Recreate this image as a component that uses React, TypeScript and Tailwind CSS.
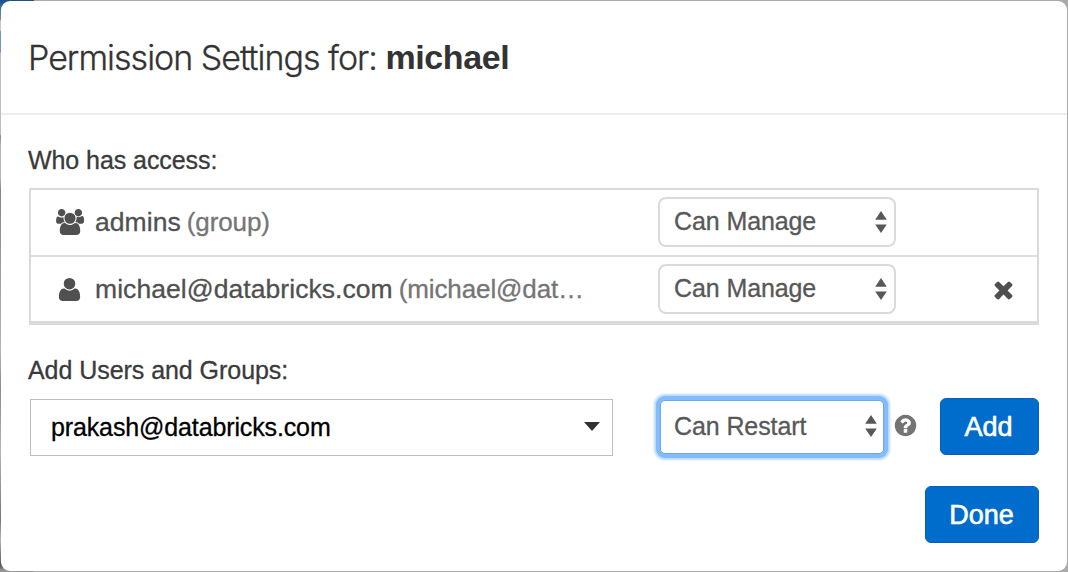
import type { ReactNode } from "react";

const USERS =
  "M657 896q-162 5-265 128h-134q-82 0-138-40.5t-56-118.5q0-353 124-353 6 0 43.5 21t97.5 42.5 119 21.5q67 0 133-23-5 37-5 66 0 159 93 293zm1071 637q0 120-73 189.5t-194 69.5h-874q-121 0-194-69.5t-73-189.5q0-53 3.5-103.5t14-109 26.5-108.5 43-97.5 62-81 85.5-53.5 111.5-20q10 0 43 21.5t73 48 107 48 135 21.5 135-21.5 107-48 73-48 43-21.5q61 0 111.5 20t85.5 53.5 62 81 43 97.5 26.5 108.5 14 109 3.5 103.5zm-1024-1277q0 106-75 181t-181 75-181-75-75-181 75-181 181-75 181 75 75 181zm704 384q0 159-112.5 271.5t-271.5 112.5-271.5-112.5-112.5-271.5 112.5-271.5 271.5-112.5 271.5 112.5 112.5 271.5zm576 225q0 78-56 118.5t-138 40.5h-134q-103-123-265-128 93-134 93-293 0-29-5-66 66 23 133 23 59 0 119-21.5t97.5-42.5 43.5-21q124 0 124 353zm-128-609q0 106-75 181t-181 75-181-75-75-181 75-181 181-75 181 75 75 181z";
const USER =
  "M1600 1405q0 120-73 189.5t-194 69.5h-874q-121 0-194-69.5t-73-189.5q0-53 3.5-103.5t14-109 26.5-108.5 43-97.5 62-81 85.5-53.5 111.5-20q9 0 42 21.5t74.5 48 108 48 133.5 21.5 133.5-21.5 108-48 74.5-48 42-21.5q61 0 111.5 20t85.5 53.5 62 81 43 97.5 26.5 108.5 14 109 3.5 103.5zm-320-893q0 159-112.5 271.5t-271.5 112.5-271.5-112.5-112.5-271.5 112.5-271.5 271.5-112.5 271.5 112.5 112.5 271.5z";
const TIMES =
  "M1490 1322q0 40-28 68l-136 136q-28 28-68 28t-68-28l-294-294-294 294q-28 28-68 28t-68-28l-136-136q-28-28-28-68t28-68l294-294-294-294q-28-28-28-68t28-68l136-136q28-28 68-28t68 28l294 294 294-294q28-28 68-28t68 28l136 136q28 28 28 68t-28 68l-294 294 294 294q28 28 28 68z";
const QUESTION =
  "M1024 1376v-192q0-14-9-23t-23-9h-192q-14 0-23 9t-9 23v192q0 14 9 23t23 9h192q14 0 23-9t9-23zm256-672q0-88-55.5-163t-138.5-116-170-41q-243 0-371 213-15 24 8 42l132 100q7 6 19 6 16 0 25-12 53-68 86-92 34-24 86-24 48 0 85.5 26t37.5 59q0 38-20 61t-68 45q-63 28-115.5 86.5t-52.5 125.5v36q0 14 9 23t23 9h192q14 0 23-9t9-23q0-19 21.5-49.5t54.5-49.5q32-18 49-28.5t46-35 44.5-48 28-60.5 12.5-81zm384 192q0 209-103 385.5t-279.5 279.5-385.5 103-385.5-103-279.5-279.5-103-385.5 103-385.5 279.5-279.5 385.5-103 385.5 103 279.5 279.5 103 385.5z";

function Arrows() {
  return (
    <svg className="h-[22px] w-3 shrink-0" viewBox="0 0 12 22" fill="#585858">
      <path d="M6 0 11.8 8.8H.2zM6 22 .2 13.4h11.6z" />
    </svg>
  );
}

function Select({ label }: { label: string }) {
  return (
    <button className="mb-px flex h-[50px] w-[238px] items-center justify-between rounded-lg border-2 border-[#dadada] bg-white pr-[7px] pb-px pl-[14px] text-[25px] leading-none tracking-[-0.1px] text-[#585858]">
      <span>{label}</span>
      <Arrows />
    </button>
  );
}

function AccessRow({ icon, name, detail, removable }: { icon: ReactNode; name: string; detail: string; removable?: boolean }) {
  return (
    <div className="flex h-[65px] items-center pl-6">
      <span className="flex w-10 shrink-0 items-center pb-px">{icon}</span>
      <span className="flex w-[563px] shrink-0 items-baseline gap-[6px] whitespace-nowrap leading-none">
        <span className="text-[26.5px] tracking-[0.06px] text-[#505050]">{name}</span>
        <span className="text-[26px] tracking-[-0.12px] text-[#757575]">{detail}</span>
      </span>
      <Select label="Can Manage" />
      {removable && (
        <svg className="mb-px ml-[94px] h-[27px] w-[27px]" viewBox="0 0 1792 1792" fill="#4f4f4f">
          <path d={TIMES} />
        </svg>
      )}
    </div>
  );
}

export default function App() {
  return (
    <div className="h-[572px] w-[1068px] overflow-hidden bg-[#aaaaaa] font-['Liberation_Sans',Arial,sans-serif] [-webkit-text-stroke:0.3px_currentColor]">
      <div className="h-full w-full bg-[linear-gradient(90deg,transparent_34px,#aaaaaa_34px),linear-gradient(180deg,#1d508a_0px,#6c97c2_20px,#c8c8c8_21px,#c8c8c8_30px,#6c97c2_32px,#6c97c2_52px,#bdbdbd_53px,#bdbdbd_134px,#8a8a8a_136px,#b5b5b5_146px,#b5b5b5_178px,#858585_190px,#b5b5b5_350px,#8a8a8a_390px,#b5b5b5_450px,#777_520px,#b5b5b5_540px,#555_565px,#999_571px)] p-px">
        <div className="flex h-[570px] flex-col rounded-[9px] bg-white">
          <header className="flex h-[114px] shrink-0 items-center border-b-2 border-[#eeeeee] pl-[27px] text-[34px] leading-none text-[#333]">
            <h1 className="relative top-px whitespace-pre font-['Inter',sans-serif] font-light tracking-[-1px]">
              {"Permission Settings for: "}
            </h1>
            <strong className="font-bold tracking-[-0.4px] [-webkit-text-stroke:0px]">michael</strong>
          </header>

          <main className="pr-[28px] pl-[28px]">
            <h2 className="-ml-px mt-[31px] h-[28px] text-[25px] leading-[28px] tracking-[-0.07px] text-[#3a3a3a]">
              Who has access:
            </h2>
            <div className="mt-[14px] h-[137px] border-2 border-b-4 border-[#dadada]">
              <AccessRow
                icon={
                  <svg className="h-[26px] w-[30px]" viewBox="0 0 2048 1792" fill="#505050">
                    <path d={USERS} />
                  </svg>
                }
                name="admins"
                detail="(group)"
              />
              <div className="h-0.5 bg-[#dfdfdf]" />
              <AccessRow
                icon={
                  <svg className="ml-px h-[27px] w-[27px]" viewBox="0 0 1792 1792" fill="#505050">
                    <path d={USER} />
                  </svg>
                }
                name="michael@databricks.com"
                detail="(michael@dat…"
                removable
              />
            </div>

            <h2 className="-ml-px mt-[31px] h-[28px] text-[25px] leading-[28px] tracking-[-0.05px] text-[#3a3a3a]">
              Add Users and Groups:
            </h2>
            <div className="mt-[9px] flex h-[68px] items-center">
              <div className="ml-px flex h-[57px] w-[583px] shrink-0 items-center justify-between border border-[#bdbdbd] pr-3 pl-5 text-[25px] leading-none tracking-[-0.13px] text-black">
                <span>prakash@databricks.com</span>
                <svg className="mb-px h-[9px] w-4" viewBox="0 0 16 9" fill="#333">
                  <path d="M0 0h16L8 9z" />
                </svg>
              </div>
              <button className="ml-[47px] flex h-[54px] w-[224px] shrink-0 items-center justify-between rounded-[5px] border border-[#6fa8e6] bg-white pr-[6px] pb-[2px] pl-[13px] text-[25px] leading-none tracking-[-0.1px] text-[#585858] shadow-[0_0_0_4px_#82bcfc,0_0_2px_6px_#b9daff]">
                <span>Can Restart</span>
                <Arrows />
              </button>
              <svg className="mb-1 ml-[9px] h-[25px] w-[25px] shrink-0" viewBox="0 0 1792 1792" fill="#747474">
                <path d={QUESTION} />
              </svg>
              <button className="mb-[2px] ml-auto h-[57px] w-[99px] rounded-md border border-[#0062bd] bg-[#006dcc] pt-[2px] pr-[2px] text-[27px] leading-none text-white [-webkit-text-stroke:0.6px_white]">
                Add
              </button>
            </div>
            <div className="mt-[25px] flex justify-end">
              <button className="h-[57px] w-[114px] rounded-md border border-[#0062bd] bg-[#006dcc] pt-[2px] pr-px text-[27px] leading-none text-white [-webkit-text-stroke:0.6px_white]">
                Done
              </button>
            </div>
          </main>
        </div>
      </div>
    </div>
  );
}
